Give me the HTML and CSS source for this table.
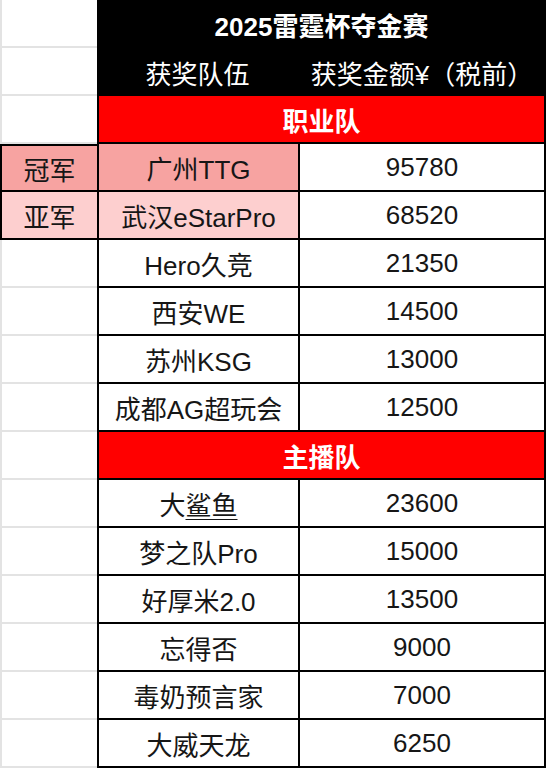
FILE: index.html
```html
<!DOCTYPE html>
<html lang="zh-CN">
<head>
<meta charset="utf-8">
<title>2025雷霆杯夺金赛</title>
<link rel="stylesheet" href="styles.css">
</head>
<body>
<div class="sheet">
  <div class="blank"></div>
  <div class="head title span2">2025雷霆杯夺金赛</div>

  <div class="blank"></div>
  <div class="head">获奖队伍</div>
  <div class="head">获奖金额¥（税前）</div>

  <div class="blank"></div>
  <div class="section span2">职业队</div>

  <div class="rank gold first">冠军</div>
  <div class="cell gold">广州TTG</div>
  <div class="cell amt">95780</div>

  <div class="rank silver">亚军</div>
  <div class="cell silver">武汉eStarPro</div>
  <div class="cell amt">68520</div>

  <div class="blank"></div>
  <div class="cell">Hero久竞</div>
  <div class="cell amt">21350</div>

  <div class="blank"></div>
  <div class="cell">西安WE</div>
  <div class="cell amt">14500</div>

  <div class="blank"></div>
  <div class="cell">苏州KSG</div>
  <div class="cell amt">13000</div>

  <div class="blank"></div>
  <div class="cell">成都AG超玩会</div>
  <div class="cell amt">12500</div>

  <div class="blank"></div>
  <div class="section span2">主播队</div>

  <div class="blank"></div>
  <div class="cell">大<span class="mark">鲨鱼</span></div>
  <div class="cell amt">23600</div>

  <div class="blank"></div>
  <div class="cell">梦之队Pro</div>
  <div class="cell amt">15000</div>

  <div class="blank"></div>
  <div class="cell">好厚米2.0</div>
  <div class="cell amt">13500</div>

  <div class="blank"></div>
  <div class="cell">忘得否</div>
  <div class="cell amt">9000</div>

  <div class="blank"></div>
  <div class="cell">毒奶预言家</div>
  <div class="cell amt">7000</div>

  <div class="blank"></div>
  <div class="cell">大威天龙</div>
  <div class="cell amt">6250</div>
</div>
</body>
</html>
```

FILE: styles.css
```css
html, body {
  margin: 0;
  padding: 0;
  background: #ffffff;
}

body {
  font-family: "Liberation Sans", "Noto Sans CJK SC", sans-serif;
  font-size: 26px;
  color: #161616;
}

.sheet {
  display: grid;
  grid-template-columns: 97px 201px 248px;
  grid-auto-rows: 48px;
  width: 546px;
}

.sheet > div {
  box-sizing: border-box;
  display: flex;
  align-items: center;
  justify-content: center;
  white-space: nowrap;
}

.span2 {
  grid-column: span 2;
}

.blank {
  border-left: 2px solid #e3e3e3;
  border-bottom: 2px solid #e3e3e3;
}

.head {
  background: #000000;
  color: #ffffff;
}

.title {
  font-weight: bold;
}

.section {
  background: #ff0000;
  color: #ffffff;
  font-weight: bold;
  border-left: 2px solid #000;
  border-right: 2px solid #000;
  border-bottom: 2px solid #000;
}

.rank {
  border-left: 2px solid #000;
  border-bottom: 2px solid #000;
}

.rank.first {
  border-top: 2px solid #000;
}

.cell {
  border-left: 2px solid #000;
  border-bottom: 2px solid #000;
}

.amt {
  border-right: 2px solid #000;
}

.gold {
  background: #f7a3a1;
}

.silver {
  background: #fdcfcf;
}

.mark {
  text-decoration: underline;
  text-decoration-thickness: 1px;
  text-underline-offset: 4px;
}
```
